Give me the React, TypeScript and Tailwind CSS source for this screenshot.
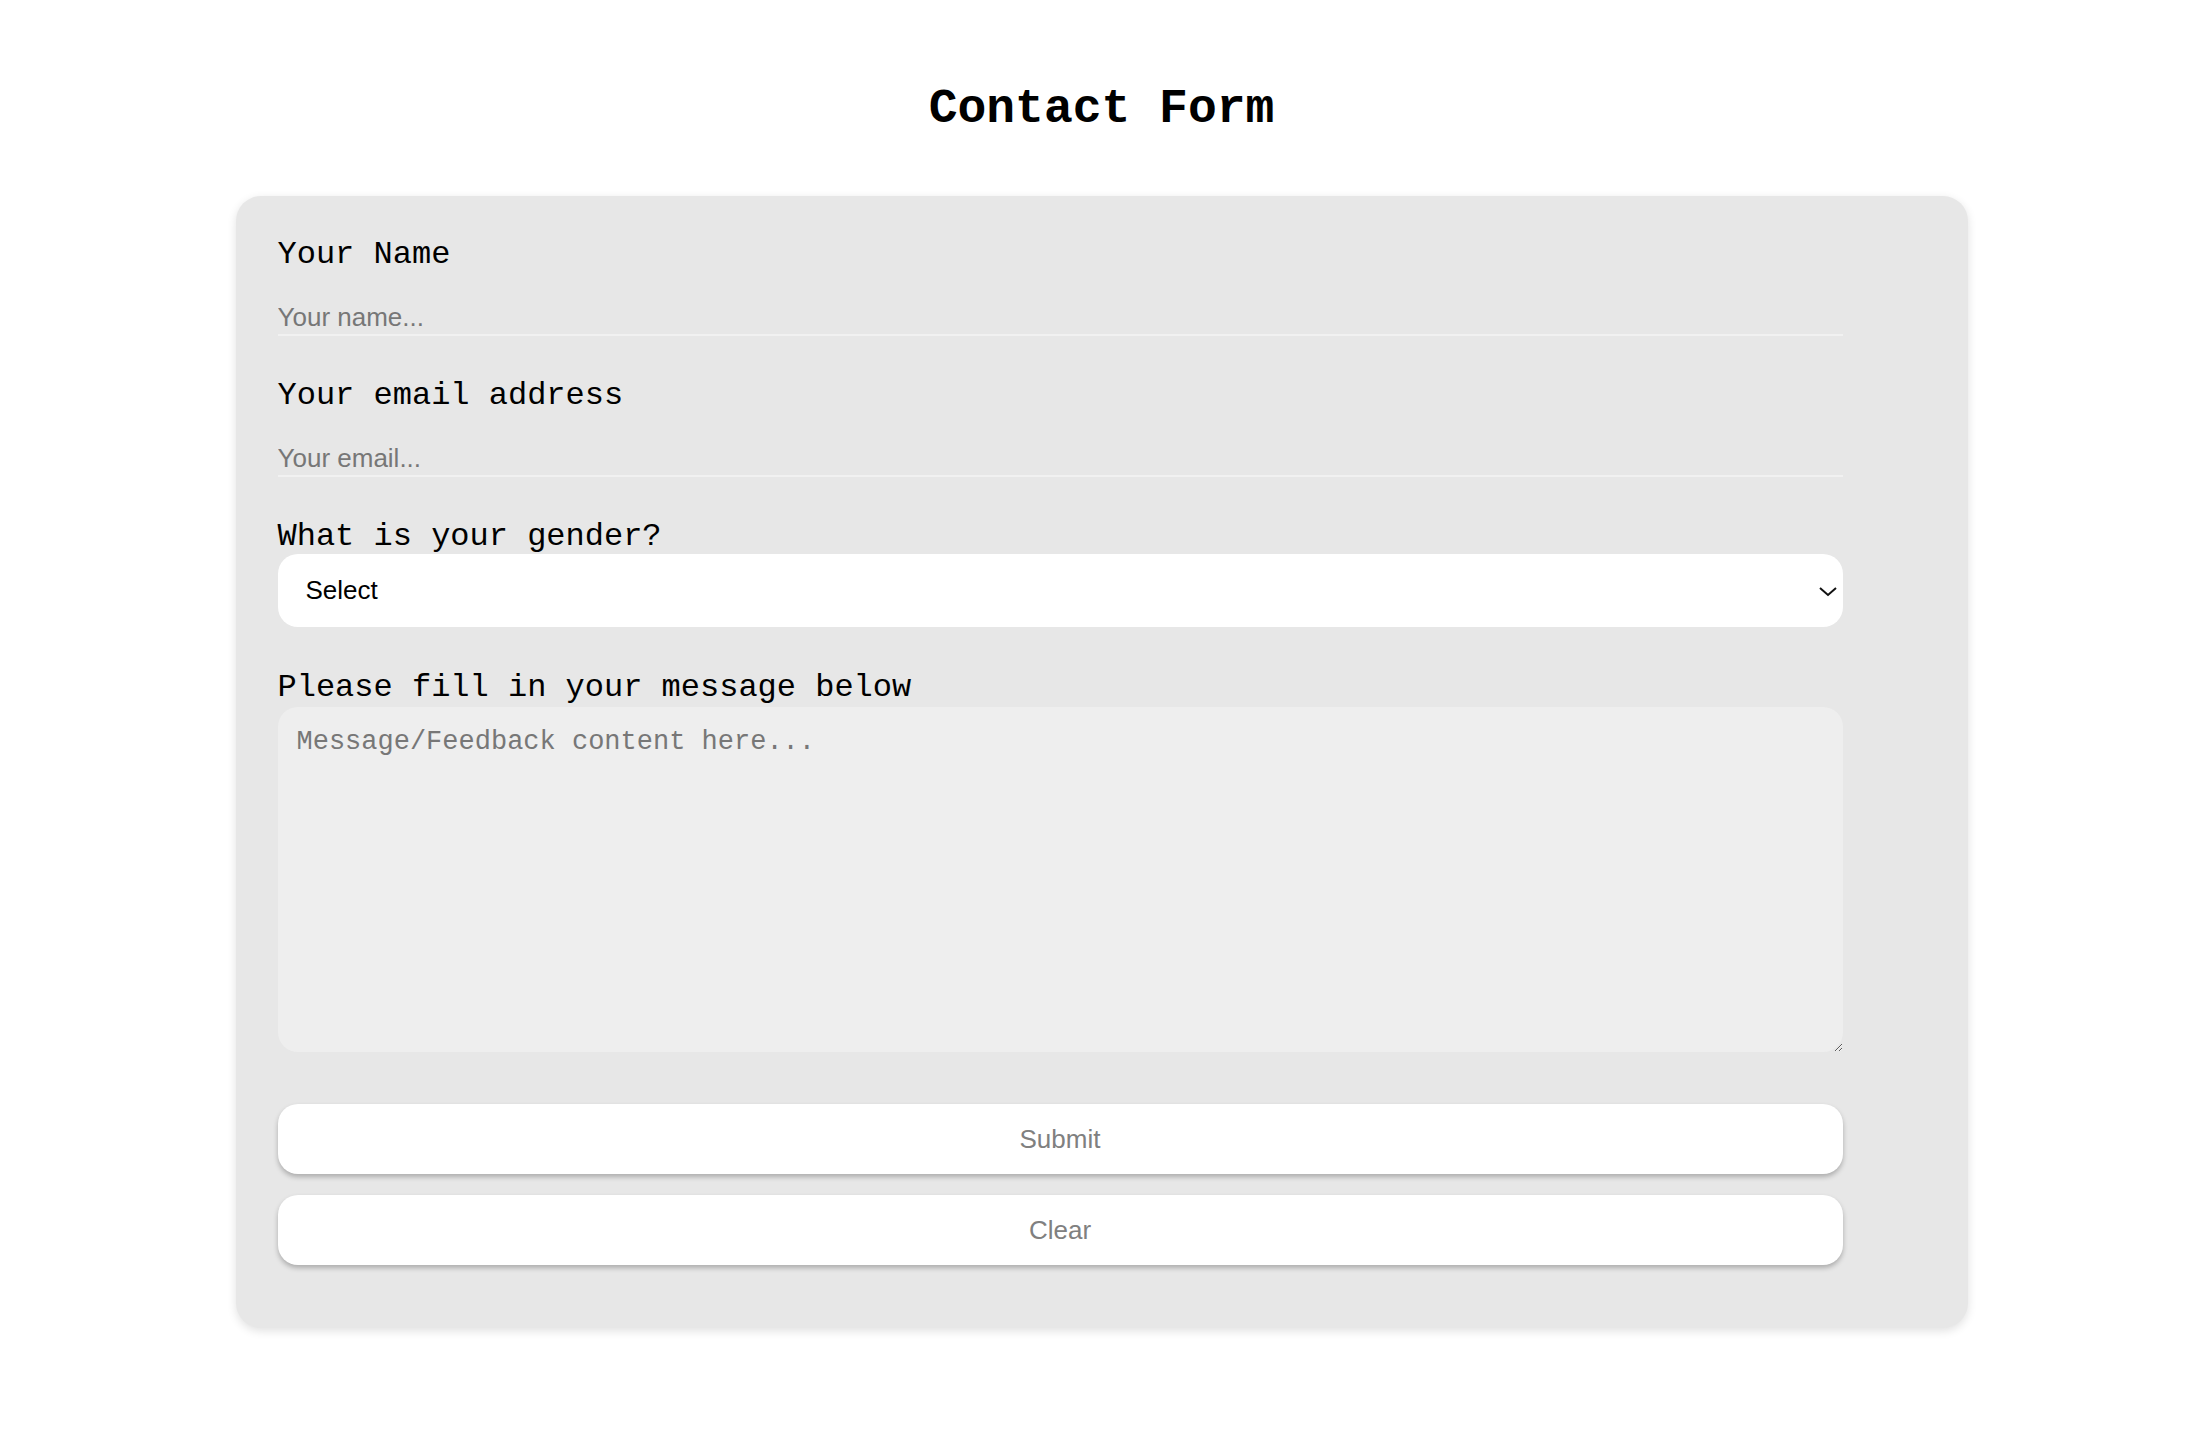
import { useState } from "react";

const mono = "font-['Liberation_Mono','Courier_New',monospace]";
const sans = "font-['Liberation_Sans',Arial,sans-serif]";

function Label({ children, htmlFor }: { children: string; htmlFor: string }) {
  return (
    <label htmlFor={htmlFor} className={`block pt-[3px] text-[32px] leading-[36px] text-black ${mono}`}>
      {children}
    </label>
  );
}

export default function App() {
  const [gender, setGender] = useState("");

  return (
    <div className="min-h-screen bg-white pl-[5px] pb-[118px]">
      <h1 className={`pt-[82px] text-center text-[48px] leading-[54px] font-bold text-black ${mono}`}>
        Contact Form
      </h1>

      <form
        className="mx-auto mt-[60px] w-[1732px] rounded-[25px] bg-[#e7e7e7] pl-[42px] pt-[38px] pb-[63px] shadow-[0_3px_10px_rgba(0,0,0,0.12)]"
        onSubmit={(e) => e.preventDefault()}
      >
        <Label htmlFor="name">Your Name</Label>
        <input
          id="name"
          type="text"
          placeholder="Your name..."
          className={`mt-[23px] block h-[40px] w-[1565px] border-b-2 border-[#f1f1f1] bg-transparent pt-[5px] text-[26px] text-black outline-none placeholder:text-[#777] ${sans}`}
        />

        <div className="mt-[39px]">
          <Label htmlFor="email">Your email address</Label>
        </div>
        <input
          id="email"
          type="email"
          placeholder="Your email..."
          className={`mt-[23px] block h-[40px] w-[1565px] border-b-2 border-[#f1f1f1] bg-transparent pt-[5px] text-[26px] text-black outline-none placeholder:text-[#777] ${sans}`}
        />

        <div className="mt-[39px]">
          <Label htmlFor="gender">What is your gender?</Label>
        </div>
        <div className="relative mt-[-1px] w-[1565px]">
          <select
            id="gender"
            value={gender}
            onChange={(e) => setGender(e.target.value)}
            className={`block h-[73px] w-full appearance-none rounded-[20px] bg-white pl-[28px] text-[26px] text-black outline-none ${sans}`}
          >
            <option value="">Select</option>
            <option value="male">Male</option>
            <option value="female">Female</option>
            <option value="other">Other</option>
          </select>
          <svg
            className="pointer-events-none absolute right-[5px] top-[32px]"
            width="20"
            height="11"
            viewBox="0 0 20 11"
            fill="none"
          >
            <path d="M2 2 L10 9 L18 2" stroke="#111" strokeWidth="2" />
          </svg>
        </div>

        <div className="mt-[40px]">
          <Label htmlFor="message">Please fill in your message below</Label>
        </div>
        <textarea
          id="message"
          placeholder="Message/Feedback content here..."
          className={`mt-[1px] block h-[345px] w-[1565px] rounded-[20px] bg-[#eeeeee] px-[19px] py-[18px] text-[27px] leading-[34px] text-black outline-none placeholder:text-[#777] ${mono}`}
        />

        <div className="mt-[52px] flex w-[1565px] flex-col gap-[21px]">
          <button
            type="submit"
            className={`h-[70px] rounded-[20px] bg-white text-[26px] text-[#808080] shadow-[0_3px_5px_rgba(0,0,0,0.25)] ${sans}`}
          >
            Submit
          </button>
          <button
            type="button"
            onClick={() => setGender("")}
            className={`h-[70px] rounded-[20px] bg-white text-[26px] text-[#808080] shadow-[0_3px_5px_rgba(0,0,0,0.25)] ${sans}`}
          >
            Clear
          </button>
        </div>
      </form>
    </div>
  );
}
